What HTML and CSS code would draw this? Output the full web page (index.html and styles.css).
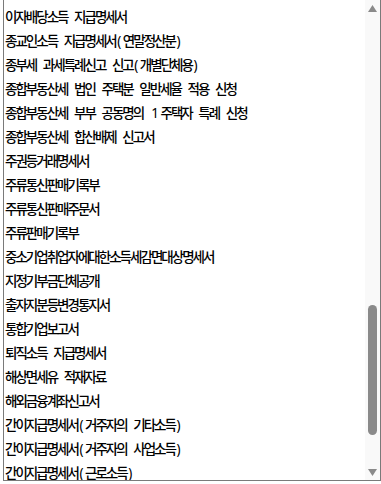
FILE: index.html
```html
<!DOCTYPE html>
<html lang="ko">
<head>
    <meta charset="utf-8">
    <title>서식 목록</title>
    <link rel="stylesheet" href="styles.css">
</head>
<body>
    <div class="listbox">
        <ul class="options">
            <li>이자배당소득 지급명세서</li>
            <li>종교인소득 지급명세서<span class="lat">(</span>연말정산분<span class="lat">)</span></li>
            <li>종부세 과세특례신고 신고<span class="lat">(</span>개별단체용<span class="lat">)</span></li>
            <li>종합부동산세 법인 주택분 일반세율 적용 신청</li>
            <li>종합부동산세 부부 공동명의 <span class="lat">1</span>주택자 특례 신청</li>
            <li>종합부동산세 합산배제 신고서</li>
            <li>주권등거래명세서</li>
            <li>주류통신판매기록부</li>
            <li>주류통신판매주문서</li>
            <li>주류판매기록부</li>
            <li>중소기업취업자에대한소득세감면대상명세서</li>
            <li>지정기부금단체공개</li>
            <li>출자지분등변경통지서</li>
            <li>통합기업보고서</li>
            <li>퇴직소득 지급명세서</li>
            <li>해상면세유 적재자료</li>
            <li>해외금융계좌신고서</li>
            <li>간이지급명세서<span class="lat">(</span>거주자의 기타소득<span class="lat">)</span></li>
            <li>간이지급명세서<span class="lat">(</span>거주자의 사업소득<span class="lat">)</span></li>
            <li>간이지급명세서<span class="lat">(</span>근로소득<span class="lat">)</span></li>
        </ul>
        <div class="scrollbar">
            <div class="arrow">
                <svg width="9" height="7" viewBox="0 0 9 7"><polygon points="0,7 4.5,0 9,7" fill="#8a8a8a"/></svg>
            </div>
            <div class="thumb"></div>
            <div class="arrow arrow-down">
                <svg width="9" height="7" viewBox="0 0 9 7"><polygon points="0,0 9,0 4.5,7" fill="#8a8a8a"/></svg>
            </div>
        </div>
    </div>
</body>
</html>
```

FILE: styles.css
```css
:root {
    --border-color: #7a7a7a;
    --track-bg: #f9f9f9;
    --thumb-color: #8a8a8a;
    --text-color: #000000;
}

html, body {
    margin: 0;
    padding: 0;
    background: #ffffff;
}

body {
    font-family: "Noto Sans CJK KR", "Noto Sans", sans-serif;
    color: var(--text-color);
}

.listbox {
    display: flex;
    width: 378px;
    height: 481px;
    margin-left: 3px;
    box-sizing: border-box;
    border: 1px solid var(--border-color);
    border-top: 0;
    background: #ffffff;
    overflow: hidden;
}

.options {
    flex: 1;
    list-style: none;
    margin: 0;
    padding: 5px 0 0 1px;
}

.options li {
    height: 15px;
    padding: 4px 0 5px;
    line-height: 15px;
    font-size: 13.5px;
    font-weight: 500;
    letter-spacing: -2px;
    word-spacing: 4.8px;
    white-space: nowrap;
}

.options li:last-child {
    padding-bottom: 0;
}

.lat {
    font-family: "Noto Sans", sans-serif;
    font-weight: 400;
    letter-spacing: 0;
    margin: 0 1.5px;
}

.scrollbar {
    width: 15px;
    display: flex;
    flex-direction: column;
    align-items: center;
    background: var(--track-bg);
}

.arrow {
    height: 16px;
    display: flex;
    align-items: center;
    justify-content: center;
}

.arrow svg {
    display: block;
}

.thumb {
    width: 9px;
    height: 130px;
    margin-top: 289px;
    border-radius: 5px;
    background: var(--thumb-color);
}

.arrow-down {
    margin-top: auto;
}
```
